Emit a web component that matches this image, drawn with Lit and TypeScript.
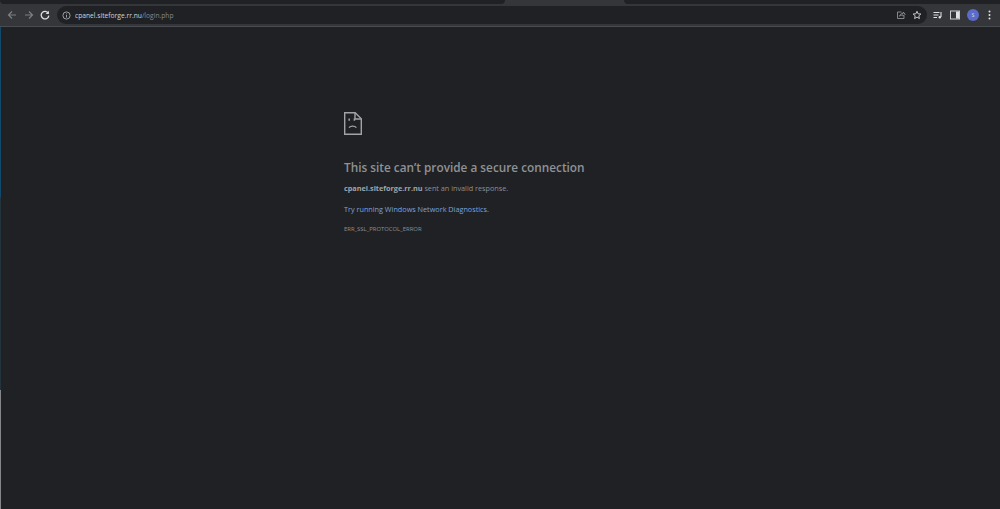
import { LitElement, html, css } from "lit";
import { customElement } from "lit/decorators.js";

@customElement("app-root")
export class AppRoot extends LitElement {
  static styles = css`
    :host {
      display: block;
      width: 1000px;
      height: 509px;
      overflow: hidden;
      background: #202124;
      font-family: "Open Sans", "Liberation Sans", sans-serif;
      color: #8d9094;
    }
    .tabs {
      display: flex;
      height: 4px;
      background: #35363a;
    }
    .tab {
      background: #202124;
      border-radius: 0 0 4px 4px;
    }
    .tab.a {
      width: 505px;
    }
    .tab.gap {
      width: 119px;
      background: transparent;
    }
    .tab.b {
      flex: 1;
      border-radius: 0 0 0 4px;
    }
    .toolbar {
      display: flex;
      align-items: center;
      height: 20px;
      padding: 1px 0;
      background: #35363a;
      border-bottom: 1px solid #494c50;
    }
    .nav {
      display: flex;
      align-items: center;
      gap: 6.5px;
      padding-left: 7px;
      width: 50px;
      box-sizing: border-box;
      flex: none;
    }
    .nav svg,
    .actions svg {
      display: block;
      flex: none;
    }
    .omnibox {
      display: flex;
      align-items: center;
      flex: none;
      width: 870px;
      height: 18px;
      margin-left: 7px;
      box-sizing: border-box;
      padding: 0 5px 0 5px;
      border-radius: 9px;
      background: #202124;
      font-size: 6.7px;
    }
    .url {
      margin-left: 4px;
      color: #d2d4d8;
    }
    .url span {
      color: #85888c;
    }
    .grow {
      flex: 1;
    }
    .omni-actions {
      display: flex;
      align-items: center;
      gap: 6px;
    }
    .actions {
      display: flex;
      align-items: center;
      gap: 7px;
      margin-left: 6px;
    }
    .avatar {
      width: 12px;
      height: 12px;
      border-radius: 50%;
      background: #5a6bc9;
      color: #d8dbe6;
      font-size: 5.5px;
      line-height: 12px;
      text-align: center;
      flex: none;
    }
    .dots {
      margin-left: 2px;
    }
    .page {
      padding: 86px 0 0 344px;
      height: 484px;
      box-sizing: border-box;
      background: linear-gradient(
          to bottom,
          #0f4a6a 0,
          #0f4a6a 170px,
          #24343c 171px,
          #24343c 363px,
          #85868a 363px,
          #85868a 100%
        )
        left top / 1px 100% no-repeat;
    }
    .icon {
      display: block;
      width: 18px;
      height: 23px;
      margin-top: -1px;
    }
    h1 {
      margin: 24px 0 0;
      font-size: 11.8px;
      line-height: 16px;
      font-weight: 600;
      color: #8f9296;
    }
    p {
      margin: 0;
      font-size: 7.25px;
      line-height: 11px;
    }
    .host {
      margin-top: 8px;
    }
    .host b {
      font-weight: 700;
      color: #a2a5a9;
    }
    .link {
      margin-top: 10px;
      color: #7da3dc;
    }
    .code {
      margin-top: 9px;
      font-size: 5.9px;
    }
  `;

  render() {
    return html`
      <div class="tabs">
        <div class="tab a"></div>
        <div class="tab gap"></div>
        <div class="tab b"></div>
      </div>
      <div class="toolbar">
        <div class="nav">
          <svg width="10" height="10" viewBox="0 0 10 10" fill="none" stroke="#7c7f84" stroke-width="1.2">
            <path d="M9 5H1.5M5 1.5 1.5 5 5 8.5" />
          </svg>
          <svg width="10" height="10" viewBox="0 0 10 10" fill="none" stroke="#7c7f84" stroke-width="1.2">
            <path d="M1 5h7.5M5 1.5 8.5 5 5 8.5" />
          </svg>
          <svg width="10" height="10" viewBox="0 0 10 10" fill="none" stroke="#dee1e6" stroke-width="1.3">
            <path d="M8.3 3.2A3.8 3.8 0 1 0 8.8 5.6" />
            <path d="M8.9 .8v3.2H5.7" fill="#dee1e6" stroke="none" />
          </svg>
        </div>
        <div class="omnibox">
          <svg width="9" height="9" viewBox="0 0 9 9" fill="none" stroke="#a9acb1" stroke-width="0.9">
            <circle cx="4.5" cy="4.5" r="3.6" />
            <path d="M4.5 4v2.6M4.5 2.4v.9" />
          </svg>
          <div class="url">cpanel.siteforge.rr.nu<span>/login.php</span></div>
          <div class="grow"></div>
          <div class="omni-actions">
            <svg width="10" height="10" viewBox="0 0 10 10" fill="none" stroke="#8f9296" stroke-width="0.9">
              <path d="M5.5 2H1.5v6.5h6.5V6" />
              <path d="M3.5 6.2C4 4.4 5.6 3.4 7.2 3.4V2l2 2.2-2 2V5C5.8 5 4.5 5.3 3.5 6.2Z" />
            </svg>
            <svg width="10" height="10" viewBox="0 0 10 10" fill="none" stroke="#c4c7cc" stroke-width="1">
              <path d="M5 1.2 6.1 3.8 8.9 4 6.8 5.8 7.4 8.6 5 7.1 2.6 8.6 3.2 5.8 1.1 4 3.9 3.8Z" />
            </svg>
          </div>
        </div>
        <div class="actions">
          <svg width="10" height="10" viewBox="0 0 10 10" fill="none" stroke="#dee1e6" stroke-width="1.1">
            <path d="M.5 2.5h6M.5 5h5M.5 7.5h3.5M8 2v5" />
            <circle cx="6.8" cy="7.3" r="1.2" fill="#dee1e6" stroke="none" />
          </svg>
          <svg width="10" height="10" viewBox="0 0 10 10" fill="none" stroke="#c9ccd1" stroke-width="1">
            <rect x=".5" y="1" width="9" height="8" />
            <rect x="6" y="1.5" width="3" height="7" fill="#dee1e6" stroke="none" />
          </svg>
          <div class="avatar">S</div>
          <svg class="dots" width="3" height="10" viewBox="0 0 3 10" fill="#dee1e6">
            <circle cx="1.5" cy="1.5" r="1" />
            <circle cx="1.5" cy="5" r="1" />
            <circle cx="1.5" cy="8.5" r="1" />
          </svg>
        </div>
      </div>
      <div class="page">
        <svg class="icon" viewBox="0 0 18 23" fill="none" stroke="#a0a3a7" stroke-width="1.4">
          <path d="M.7.7h10.5l6.1 6.1v15.5H.7Z" />
          <path d="M11 1v6h6" />
          <path d="M5.2 6.5v2.2M10.4 6.5v2.2" stroke-width="1.5" />
          <path d="M5 15.6c1.6-2 5.6-2 7.4 0" />
        </svg>
        <h1>This site can’t provide a secure connection</h1>
        <p class="host"><b>cpanel.siteforge.rr.nu</b> sent an invalid response.</p>
        <p class="link">Try running Windows Network Diagnostics.</p>
        <p class="code">ERR_SSL_PROTOCOL_ERROR</p>
      </div>
    `;
  }
}
